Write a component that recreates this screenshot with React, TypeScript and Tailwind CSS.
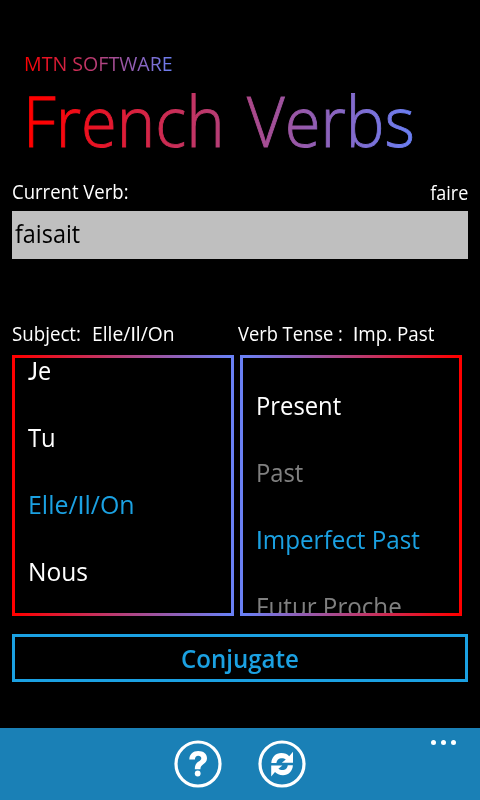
import React from "react";

type Item = { label: string; tone: string; fit: string };

const subjects: Item[] = [
  { label: "Je", tone: "text-white", fit: "scale-x-[0.93]" },
  { label: "Tu", tone: "text-white", fit: "scale-x-[0.94]" },
  { label: "Elle/Il/On", tone: "text-[#1ba1e2]", fit: "scale-x-[0.985]" },
  { label: "Nous", tone: "text-white", fit: "scale-x-[0.97]" },
];

const tenses: Item[] = [
  { label: "Present", tone: "text-white", fit: "scale-x-[0.94]" },
  { label: "Past", tone: "text-[#808080]", fit: "scale-x-[0.94]" },
  { label: "Imperfect Past", tone: "text-[#1ba1e2]", fit: "scale-x-[0.957]" },
  { label: "Futur Proche", tone: "text-[#808080]", fit: "scale-x-[0.955]" },
];

/* Sets capital I and J in Lato: a plain bar, and a J that stays on the baseline. */
function Label({ text }: { text: string }) {
  return (
    <>
      {text.split(/([IJ])/).map((part, i) =>
        part === "I" || part === "J" ? (
          <span key={i} className="font-['Lato',sans-serif]">
            {part}
          </span>
        ) : (
          part
        ),
      )}
    </>
  );
}

function Picker({ items, frame, offset }: { items: Item[]; frame: string; offset: string }) {
  return (
    <div className={`h-[261px] w-[222px] p-[3px] ${frame}`}>
      <div className="h-full overflow-hidden bg-black pl-[13px]">
        <ul className={offset}>
          {items.map((it) => (
            <li key={it.label} className={`h-[67px] text-[25.3px] leading-[67px] whitespace-nowrap ${it.tone}`}>
              <span className={`inline-block origin-left ${it.fit}`}>
                <Label text={it.label} />
              </span>
            </li>
          ))}
        </ul>
      </div>
    </div>
  );
}

const ARROW =
  "M13.3 23C13.6 17 17.8 13 23.2 13C26.8 13 29.3 14.2 31.2 16.2L35 11.8V22.8H23.8L27.8 19.4C26.6 18.4 24.8 18 22.8 18.2C20.2 18.5 18.8 20.4 18.4 23Z";

export default function App() {
  return (
    <div className="flex h-[800px] w-[480px] flex-col overflow-hidden bg-black font-['Open_Sans','Noto_Sans',sans-serif] text-white">
      <header className="flex h-[177px] flex-col items-start pt-[50px] pl-6 whitespace-nowrap">
        <div className="h-7 origin-left scale-x-[0.98] bg-linear-to-r/srgb from-[#ff0000] to-[#6a80f5] bg-clip-text text-[20px] leading-7 text-transparent">
          MTN SOFTWARE
        </div>
        <h1 className="-ml-px h-[84px] origin-left scale-x-[0.93] bg-linear-to-r/srgb from-[#ff0000] from-4% to-[#6a80f5] bg-clip-text text-[70px] leading-[84px] font-light text-transparent [word-spacing:6px] [-webkit-text-stroke:0.9px_transparent]">
          French Verbs
        </h1>
      </header>

      <div className="flex h-[34px] justify-between px-3 text-[20px] leading-[30px] whitespace-nowrap">
        <span className="origin-left scale-x-[0.926]">Current Verb:</span>
        <span className="mt-px origin-right scale-x-[0.9]">faire</span>
      </div>
      <div className="mx-3 h-12 bg-[#bfbfbf] pl-[3px] text-[25.3px] leading-[44px] text-black">
        <span className="inline-block origin-left scale-x-[0.925]">faisait</span>
      </div>

      <div className="mt-[60px] flex h-9 pl-3 text-[20px] leading-[29px] whitespace-nowrap">
        <div className="flex w-[226px]">
          <span className="w-[80px] origin-left scale-x-[0.935]">Subject:</span>
          <span className="origin-left scale-x-[0.965]">
            <Label text="Elle/Il/On" />
          </span>
        </div>
        <div className="flex">
          <span className="w-[115px] origin-left scale-x-[0.915]">Verb Tense :</span>
          <span className="origin-left scale-x-[0.94]">
            <Label text="Imp. Past" />
          </span>
        </div>
      </div>

      <div className="flex gap-[6px] pl-3">
        <Picker items={subjects} frame="bg-linear-to-r/srgb from-[#ff0000] from-2% to-[#6a80f5] to-98%" offset="-mt-[21px]" />
        <Picker items={tenses} frame="bg-linear-to-r/srgb from-[#6a80f5] from-2% to-[#ff0000] to-98%" offset="mt-[14px]" />
      </div>

      <button className="mx-3 mt-[18px] flex h-12 shrink-0 items-center justify-center border-[3px] border-[#1ba1e2] text-[25.3px] leading-[42px] font-semibold text-[#1ba1e2]">
        <span className="inline-block scale-x-[0.95]">Conjugate</span>
      </button>

      <footer className="mt-auto flex h-[72px] shrink-0 bg-[#1a80b6]">
        <div className="w-[174px]" />
        <div className="flex flex-1 gap-9 pt-3">
          <svg width="48" height="48" viewBox="0 0 48 48" fill="none">
            <circle cx="24" cy="24" r="22" stroke="white" strokeWidth="3.2" />
            <path
              d="M15.3 19.5C15.5 14 19 11 24.2 11C29.5 11 33 13.8 33 18.2C33 21.6 31 23 29 24.4C27.3 25.7 26.4 26.6 26.4 29.3H20.8C20.8 25 22 23.3 24.2 21.8C26.3 20.4 27.3 19.8 27.3 18.2C27.3 16.6 26 15.7 24.2 15.7C22.2 15.7 21 17 20.9 19.5Z"
              fill="white"
            />
            <circle cx="23.7" cy="33.5" r="2.9" fill="white" />
          </svg>
          <svg width="48" height="48" viewBox="0 0 48 48" fill="none">
            <circle cx="24" cy="24" r="22" stroke="white" strokeWidth="3.2" />
            <path d={ARROW} fill="white" />
            <path d={ARROW} fill="white" transform="rotate(180 24.1 24.1)" />
          </svg>
        </div>
        <div className="flex gap-[5px] pt-3 pr-6">
          <i className="size-[5px] rounded-full bg-white" />
          <i className="size-[5px] rounded-full bg-white" />
          <i className="size-[5px] rounded-full bg-white" />
        </div>
      </footer>
    </div>
  );
}
